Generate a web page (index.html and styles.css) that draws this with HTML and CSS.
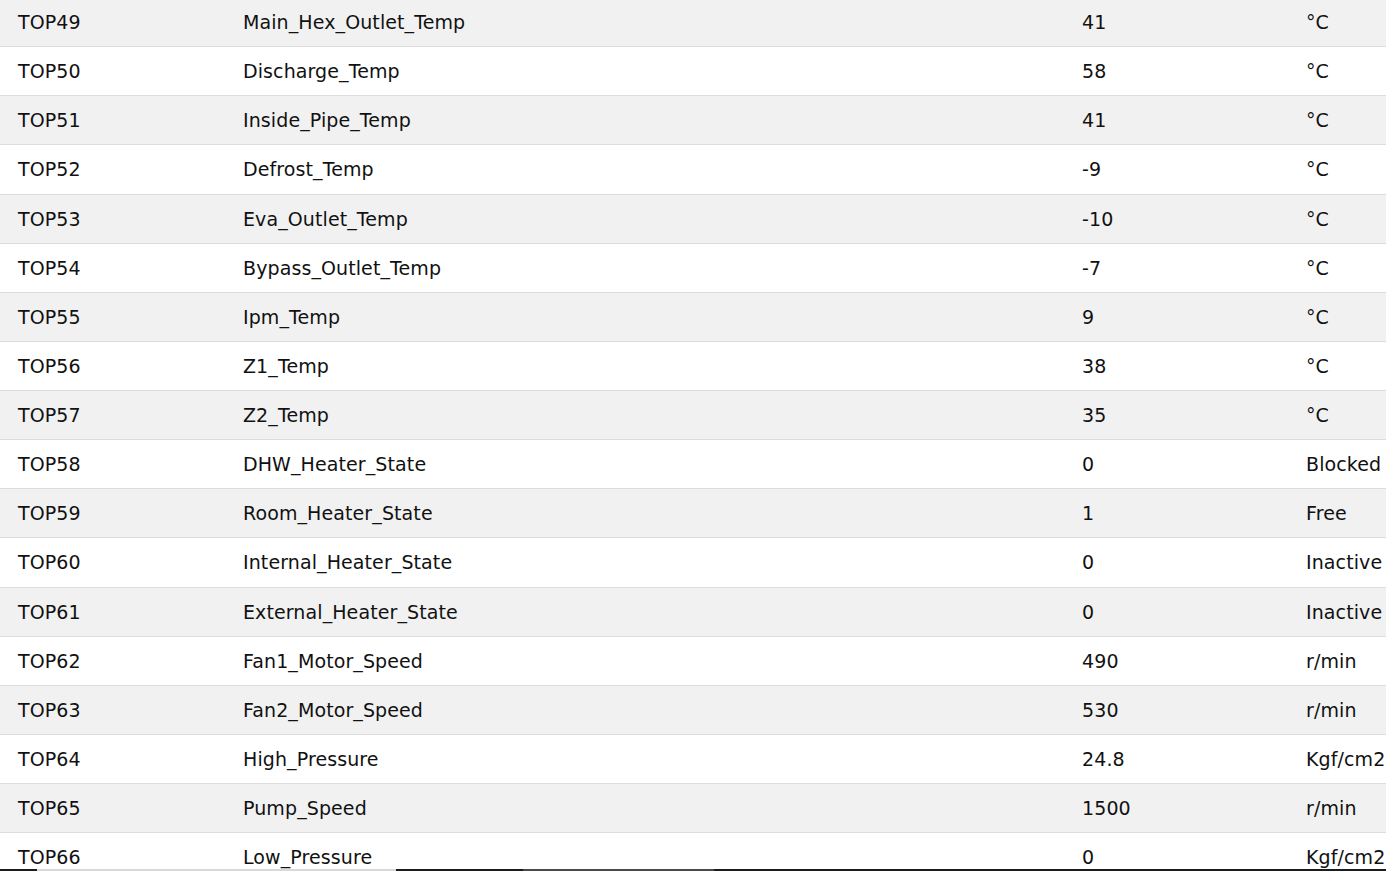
FILE: index.html
```html
<!DOCTYPE html>
<html>
<head>
<meta charset="utf-8">
<link rel="stylesheet" href="styles.css">
</head>
<body>
<table class="data">
<colgroup><col class="c-id"><col class="c-name"><col class="c-val"><col class="c-unit"></colgroup>
<tbody>
<tr><td>TOP49</td><td>Main_Hex_Outlet_Temp</td><td>41</td><td>°C</td></tr>
<tr><td>TOP50</td><td>Discharge_Temp</td><td>58</td><td>°C</td></tr>
<tr><td>TOP51</td><td>Inside_Pipe_Temp</td><td>41</td><td>°C</td></tr>
<tr><td>TOP52</td><td>Defrost_Temp</td><td>-9</td><td>°C</td></tr>
<tr><td>TOP53</td><td>Eva_Outlet_Temp</td><td>-10</td><td>°C</td></tr>
<tr><td>TOP54</td><td>Bypass_Outlet_Temp</td><td>-7</td><td>°C</td></tr>
<tr><td>TOP55</td><td>Ipm_Temp</td><td>9</td><td>°C</td></tr>
<tr><td>TOP56</td><td>Z1_Temp</td><td>38</td><td>°C</td></tr>
<tr><td>TOP57</td><td>Z2_Temp</td><td>35</td><td>°C</td></tr>
<tr><td>TOP58</td><td>DHW_Heater_State</td><td>0</td><td>Blocked</td></tr>
<tr><td>TOP59</td><td>Room_Heater_State</td><td>1</td><td>Free</td></tr>
<tr><td>TOP60</td><td>Internal_Heater_State</td><td>0</td><td>Inactive</td></tr>
<tr><td>TOP61</td><td>External_Heater_State</td><td>0</td><td>Inactive</td></tr>
<tr><td>TOP62</td><td>Fan1_Motor_Speed</td><td>490</td><td>r/min</td></tr>
<tr><td>TOP63</td><td>Fan2_Motor_Speed</td><td>530</td><td>r/min</td></tr>
<tr><td>TOP64</td><td>High_Pressure</td><td>24.8</td><td>Kgf/cm2</td></tr>
<tr><td>TOP65</td><td>Pump_Speed</td><td>1500</td><td>r/min</td></tr>
<tr><td>TOP66</td><td>Low_Pressure</td><td>0</td><td>Kgf/cm2</td></tr>
</tbody>
</table>
<div class="edge">
  <span class="seg dark s1"></span>
  <span class="seg light s2"></span>
  <span class="seg dark s3"></span>
  <span class="seg mid s4"></span>
  <span class="seg dark s5"></span>
</div>
</body>
</html>
```

FILE: styles.css
```css
html, body {
  margin: 0;
  padding: 0;
  background: #ffffff;
  overflow: hidden;
  width: 1386px;
  height: 871px;
}
body {
  font-family: "DejaVu Sans", Verdana, sans-serif;
  font-size: 19px;
  letter-spacing: 0.1px;
  color: #111111;
}
.data {
  border-collapse: collapse;
  table-layout: fixed;
  width: 1512px;
  margin-top: -2px;
}
.c-id { width: 225px; }
.c-name { width: 839px; }
.c-val { width: 224px; }
.c-unit { width: 224px; }
.data td {
  padding: 13px 18px 13px;
  height: 22.125px;
  line-height: 22.125px;
  border-bottom: 1px solid #dddddd;
  white-space: nowrap;
  overflow: hidden;
  text-align: left;
}
.data tr:nth-child(odd) td { background: #f1f1f1; }
.data tr:nth-child(even) td { background: #ffffff; }
.edge {
  position: fixed;
  left: 0;
  right: 0;
  bottom: 0;
  height: 2px;
  display: flex;
}
.seg { display: block; height: 100%; }
.dark { background: #1c1c1c; }
.light { background: #d9d9d9; }
.mid { background: #4a4a4a; }
.s1 { width: 37px; }
.s2 { width: 359px; }
.s3 { width: 127px; }
.s4 { width: 191px; }
.s5 { flex: 1; }
```
